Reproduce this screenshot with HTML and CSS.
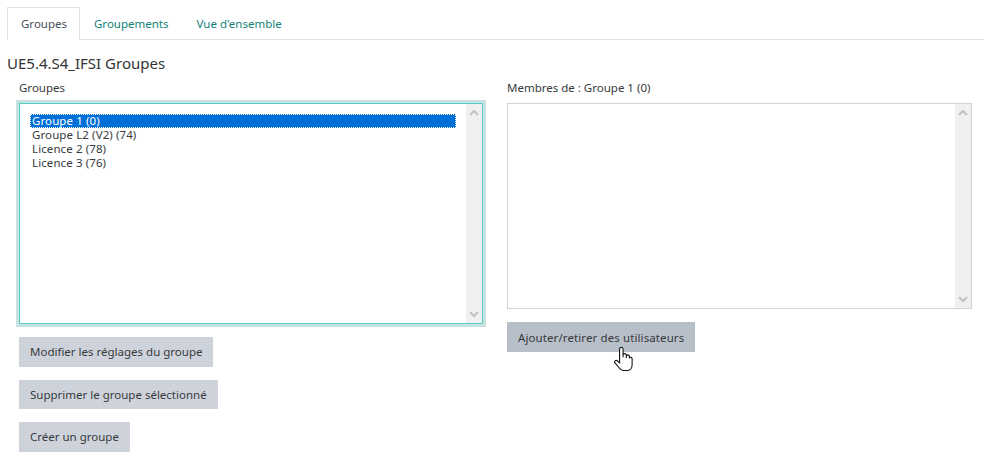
FILE: index.html
```html
<!DOCTYPE html>
<html lang="fr">
<head>
  <meta charset="UTF-8">
  <title>UE5.4.S4_IFSI Groupes</title>
  <link rel="stylesheet" href="styles.css">
</head>
<body>
  <ul class="tabs">
    <li class="tab active">Groupes</li>
    <li class="tab">Groupements</li>
    <li class="tab">Vue d'ensemble</li>
  </ul>

  <h2 class="title">UE5.4.S4_IFSI Groupes</h2>

  <div class="columns">
    <div class="col col-left">
      <div class="label">Groupes</div>
      <div class="listbox focused">
        <ul class="options">
          <li class="option selected">Groupe 1 (0)</li>
          <li class="option">Groupe L2 (V2) (74)</li>
          <li class="option">Licence 2 (78)</li>
          <li class="option">Licence 3 (76)</li>
        </ul>
        <div class="scrollbar">
          <svg class="arrow" viewBox="0 0 10 7"><path d="M1 6 L5 2 L9 6" /></svg>
          <svg class="arrow" viewBox="0 0 10 7"><path d="M1 1 L5 5 L9 1" /></svg>
        </div>
      </div>
      <div class="actions">
        <button class="btn">Modifier les réglages du groupe</button>
        <button class="btn">Supprimer le groupe sélectionné</button>
        <button class="btn">Créer un groupe</button>
      </div>
    </div>

    <div class="col col-right">
      <div class="label">Membres de : Groupe 1 (0)</div>
      <div class="listbox">
        <ul class="options"></ul>
        <div class="scrollbar">
          <svg class="arrow" viewBox="0 0 10 7"><path d="M1 6 L5 2 L9 6" /></svg>
          <svg class="arrow" viewBox="0 0 10 7"><path d="M1 1 L5 5 L9 1" /></svg>
        </div>
      </div>
      <div class="actions">
        <div class="btn-wrap">
          <button class="btn hover">Ajouter/retirer des utilisateurs</button>
          <svg class="cursor" viewBox="0.4 1 17.4 22">
            <path d="M5.5 15.5 V3 a1.6 1.6 0 0 1 3.2 0 V10.5 V8.6 a1.5 1.5 0 0 1 3 0 V11 V9.6 a1.4 1.4 0 0 1 2.8 0 V11.4 a1.3 1.3 0 0 1 2.5 0 V17 C17 20 15.5 22.5 13 22.5 H9 C7 22.5 6 21.5 5 20 L1.3 15.6 C0.3 14.2 2 12.6 3.4 13.6 Z" />
          </svg>
        </div>
      </div>
    </div>
  </div>
</body>
</html>
```

FILE: styles.css
```css
* {
  box-sizing: border-box;
}

body {
  margin: 0;
  padding: 7px 5px 0 7px;
  background-color: #fff;
  color: #373a3c;
  font-family: "Noto Sans", "Open Sans", sans-serif;
  font-size: 11.5px;
}

ul {
  list-style: none;
  margin: 0;
  padding: 0;
}

/* tabs */
.tabs {
  display: flex;
  height: 33px;
  border-bottom: 1px solid #dee2e6;
}

.tab {
  height: 33px;
  padding: 9px 14px 0;
  line-height: 16px;
  color: #0f7f78;
}

.tab.active {
  width: 73px;
  color: #495057;
  background-color: #fff;
  border: 1px solid #dee2e6;
  border-bottom-color: #fff;
  padding: 8px 13px 0;
}

.title {
  margin: 14px 0 0;
  height: 19px;
  line-height: 19px;
  font-size: 15px;
  font-weight: 400;
  color: #333;
}

.columns {
  display: flex;
  padding: 7px 0 0 12px;
}

.col-left {
  width: 488px;
}

.col-right {
  width: 465px;
}

.label {
  height: 16px;
  line-height: 16px;
  margin-bottom: 7px;
}

/* list boxes */
.listbox {
  display: flex;
  width: 465px;
  height: 206px;
  border: 1px solid #ced4da;
  background-color: #fff;
}

.listbox.focused {
  width: 464px;
  height: 221px;
  border-color: #58cfc9;
  box-shadow: 0 0 0 3px #c9e2e0;
}

.options {
  flex: 1;
  padding: 10px 10px 0 10px;
  line-height: 14px;
  letter-spacing: 0.1px;
}

.option {
  padding-left: 2px;
  height: 14px;
}

.option.selected {
  color: #fff;
  background-color: #0070d8;
  outline: 1px dotted #fff;
  outline-offset: -1px;
}

.scrollbar {
  display: flex;
  flex-direction: column;
  justify-content: space-between;
  width: 16px;
  padding: 5px 3px;
  background-color: #f0f0f0;
}

.arrow {
  width: 10px;
  height: 7px;
  fill: none;
  stroke: #c2c2c2;
  stroke-width: 2;
}

/* buttons */
.actions {
  display: flex;
  flex-direction: column;
  align-items: flex-start;
  gap: 13px;
  margin-top: 13px;
}

.btn {
  height: 29.5px;
  padding: 0 11px;
  border: 0;
  background-color: #ced3db;
  color: #373a3c;
  font-family: inherit;
  font-size: 11.5px;
}

.btn.hover {
  height: 30px;
  background-color: #b7bfc9;
  letter-spacing: 0.1px;
}

.btn-wrap {
  position: relative;
  height: 30px;
}

.cursor {
  position: absolute;
  left: 107px;
  top: 25px;
  width: 19px;
  height: 24px;
  fill: #fff;
  stroke: #111;
  stroke-width: 1;
}
```
